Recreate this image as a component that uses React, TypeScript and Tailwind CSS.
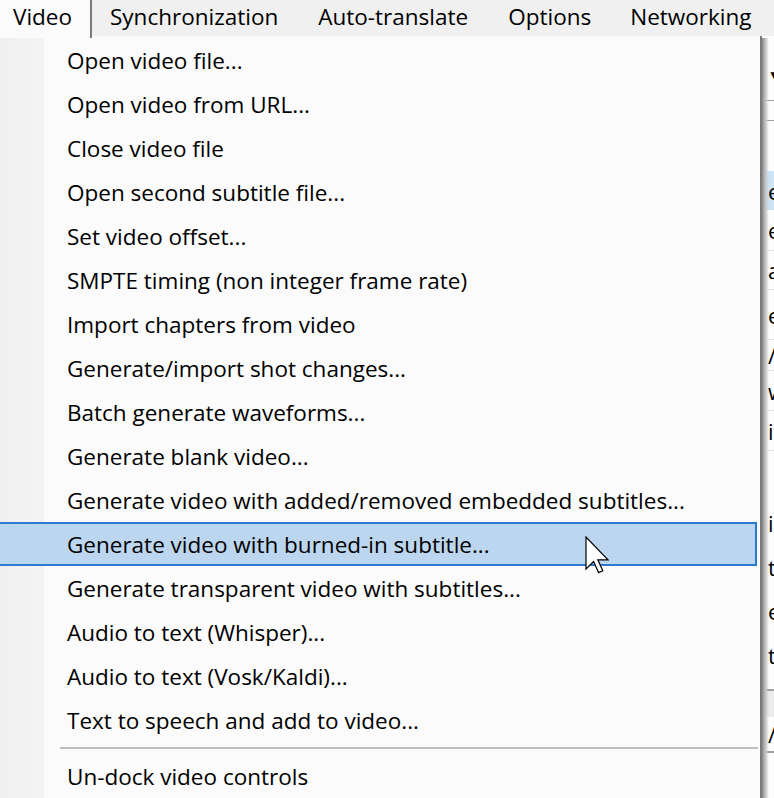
import React from "react";

const items = [
  "Open video file...",
  "Open video from URL...",
  "Close video file",
  "Open second subtitle file...",
  "Set video offset...",
  "SMPTE timing (non integer frame rate)",
  "Import chapters from video",
  "Generate/import shot changes...",
  "Batch generate waveforms...",
  "Generate blank video...",
  "Generate video with added/removed embedded subtitles...",
  "Generate video with burned-in subtitle...",
  "Generate transparent video with subtitles...",
  "Audio to text (Whisper)...",
  "Audio to text (Vosk/Kaldi)...",
  "Text to speech and add to video...",
];

const bgRows: { h: number; t: string; cls?: string }[] = [
  { h: 28, t: "" },
  { h: 22, t: "▼", cls: "text-[12px]" },
  { h: 15, t: "", cls: "border-b border-[#a0a0a0]" },
  { h: 20, t: "", cls: "border-b border-[#a0a0a0]" },
  { h: 50, t: "" },
  { h: 39, t: "e", cls: "bg-[#cde4f7]" },
  { h: 41, t: "e", cls: "border-b border-[#e5e5e5]" },
  { h: 39, t: "al", cls: "border-b border-[#e5e5e5]" },
  { h: 50, t: "e", cls: "border-b border-[#e5e5e5]" },
  { h: 31, t: "/", cls: "border-b border-[#e5e5e5]" },
  { h: 40, t: "w", cls: "border-b border-[#e5e5e5]" },
  { h: 40, t: "it", cls: "border-b border-[#e5e5e5]" },
  { h: 50, t: "" },
  { h: 44, t: "i" },
  { h: 44, t: "t" },
  { h: 44, t: "e" },
  { h: 44, t: "th" },
  { h: 14, t: "", cls: "border-b-2 border-[#a0a0a0]" },
  { h: 26, t: "", cls: "bg-[#ececec]" },
  { h: 36, t: "/", cls: "border-b-2 border-[#a0a0a0]" },
];

export default function App() {
  return (
    <div
      className="relative w-[774px] h-[798px] overflow-hidden bg-[#f0f0f0] text-black"
      style={{ fontFamily: '"Open Sans", "Noto Sans", sans-serif' }}
    >
      {/* menu bar */}
      <div className="flex h-[36px] text-[22.5px] leading-none">
        <div className="w-[92px] h-[38px] bg-[#fbfbfb] border-r-2 border-[#7a7a7a] pl-[13px] pt-[6px] relative z-10">
          Video
        </div>
        <div className="pl-[18px] pt-[6px]">Synchronization</div>
        <div className="pl-[40px] pt-[6px]">Auto-translate</div>
        <div className="pl-[40px] pt-[6px]">Options</div>
        <div className="pl-[39px] pt-[6px]">Networking</div>
      </div>
      <div className="flex">
        {/* dropdown */}
        <div className="w-[762px] h-[762px] bg-[#fbfbfb] border-r-2 border-[#7a7a7a] flex flex-col">
          <div className="flex h-[2px]">
            <div className="w-[90px] bg-[#fbfbfb]" />
            <div className="flex-1 bg-[#7a7a7a]" />
          </div>
          <div className="relative flex-1 flex flex-col pt-[2px]">
            <div className="absolute left-0 top-0 bottom-0 w-[44px] bg-gradient-to-r from-[#f0f0f0] to-[#f4f4f4]" />
            {items.map((t, i) => (
              <div
                key={i}
                className={
                  "relative h-[44px] shrink-0 flex items-center pl-[67px] mr-[3px] pt-[2px] text-[22.5px] leading-none " +
                  (i === 11 ? "bg-[#bcd6ef] border-y-2 border-r-2 border-[#3079d3]" : "")
                }
              >
                <span className="whitespace-nowrap">{t}</span>
              </div>
            ))}
            <div className="relative h-[12px] shrink-0 flex items-center pl-[60px] pr-[2px]">
              <div className="w-full h-[2px] bg-[#bdbdbd]" />
            </div>
            <div className="relative h-[44px] shrink-0 flex items-center pl-[67px] pt-[2px] text-[22.5px] leading-none">
              Un-dock video controls
            </div>
          </div>
        </div>
        {/* background app strip */}
        <div className="relative flex-1 h-[762px] overflow-hidden bg-[#fdfdfd]">
          <div className="flex flex-col text-[22px] leading-none">
            {bgRows.map((r, i) => (
              <div
                key={i}
                className={"shrink-0 flex items-center pl-[6px] whitespace-nowrap " + (r.cls ?? "")}
                style={{ height: r.h }}
              >
                {r.t}
              </div>
            ))}
          </div>
          <div className="absolute left-0 top-[2px] bottom-0 w-[7px] bg-gradient-to-r from-[#8a8a8a] via-[#c4c4c4] to-transparent" />
        </div>
      </div>
      {/* mouse cursor */}
      <svg
        className="absolute left-[585px] top-[536px]"
        width="24"
        height="38"
        viewBox="0 0 12 19"
      >
        <path
          d="M0.5 0.5 L0.5 16.5 L4.3 12.8 L6.8 18.3 L8.9 17.4 L6.4 11.9 L11.5 11.9 Z"
          fill="#ffffff"
          stroke="#000000"
          strokeWidth="0.6"
          strokeLinejoin="miter"
        />
      </svg>
    </div>
  );
}
